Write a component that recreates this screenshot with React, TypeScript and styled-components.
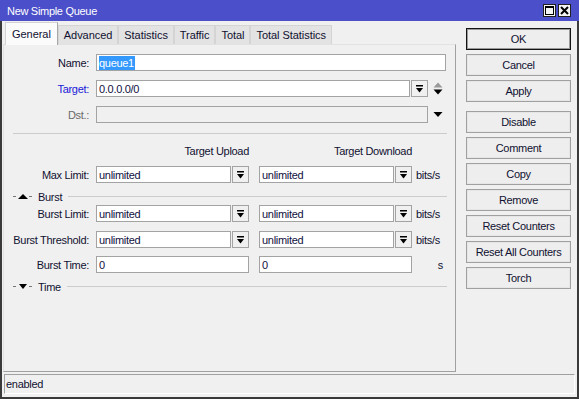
import React from 'react';
import styled, { createGlobalStyle } from 'styled-components';

const GlobalStyle = createGlobalStyle`
  html, body {
    margin: 0;
    padding: 0;
    background: #f0f0f0;
  }
  body {
    font-family: 'Liberation Sans', Arial, sans-serif;
    font-size: 11px;
    letter-spacing: -0.3px;
    color: #101030;
  }
  * {
    box-sizing: border-box;
  }
`;

const Window = styled.div`
  width: 579px;
  height: 399px;
  display: flex;
  flex-direction: column;
  background: #f0f0f0;
`;

const TitleBar = styled.div`
  height: 21px;
  flex: none;
  background: #4b4fc9;
  color: #ffffff;
  display: flex;
  align-items: center;
  padding: 0 8px 0 7px;
  font-size: 11px;
`;

const Title = styled.div`
  flex: 1;
`;

const TitleButtons = styled.div`
  display: flex;
  gap: 2px;
`;

const TitleButton = styled.div`
  width: 13px;
  height: 13px;
  background: #f4f4f4;
  border: 1px solid #202020;
  display: flex;
  align-items: center;
  justify-content: center;
`;

const Body = styled.div`
  flex: 1;
  display: flex;
  flex-direction: column;
  gap: 2px;
  border: 2px solid #3a3a3a;
  border-top: none;
  padding: 1px 2px 3px 1px;
`;

const MainRow = styled.div`
  flex: 1;
  display: flex;
  padding-right: 4px;
`;

const LeftColumn = styled.div`
  width: 453px;
  display: flex;
  flex-direction: column;
`;

const TabStrip = styled.div`
  height: 22px;
  display: flex;
  align-items: flex-end;
  padding-left: 2px;
  position: relative;
  z-index: 1;
`;

const Tab = styled.div<{ $active?: boolean }>`
  height: ${({ $active }) => ($active ? 23 : 19)}px;
  margin-bottom: ${({ $active }) => ($active ? -1 : 0)}px;
  padding: 0 ${({ $active }) => ($active ? 6 : 5)}px;
  display: flex;
  align-items: center;
  background: ${({ $active }) => ($active ? '#fbfbfb' : '#e3e3e3')};
  border: 1px solid #d4d4d4;
  border-right-color: ${({ $active }) => ($active ? '#a8a8a8' : '#d4d4d4')};
  border-bottom: none;
  color: #101030;
  font-size: 11px;
  letter-spacing: -0.05px;
`;

const Panel = styled.div`
  flex: 1;
  border: 1px solid #a0a0a0;
  border-top-color: #e2e2e2;
  border-left-color: #e2e2e2;
  padding: 9px 0 0 0;
  display: flex;
  flex-direction: column;
`;

const Row = styled.div<{ $top?: number }>`
  display: flex;
  align-items: center;
  height: 17px;
  margin-top: ${({ $top }) => $top ?? 0}px;
`;

const Label = styled.div<{ $tone?: 'link' | 'muted' }>`
  width: 86px;
  margin-right: 6px;
  text-align: right;
  padding-right: 1px;
  white-space: nowrap;
  color: ${({ $tone }) =>
    $tone === 'link' ? '#1a1ad8' : $tone === 'muted' ? '#6a6a6a' : '#101030'};
`;

const Field = styled.div<{ $width: number; $disabled?: boolean }>`
  width: ${({ $width }) => $width}px;
  height: 17px;
  border: 1px solid #a3a3a3;
  background: ${({ $disabled }) => ($disabled ? '#f0f0f0' : '#ffffff')};
  padding-left: 2px;
  display: flex;
  align-items: center;
  white-space: nowrap;
  overflow: hidden;
  color: #101040;
`;

const Selected = styled.span`
  background: #3399ff;
  color: #ffffff;
  line-height: 14px;
  padding: 0 1px 0 0;
`;

const DropButton = styled.div`
  width: 17px;
  height: 17px;
  margin-left: 1px;
  border: 1px solid #a3a3a3;
  background: #f0f0f0;
  display: flex;
  align-items: center;
  justify-content: center;
`;

const Pair = styled.div`
  display: flex;
  align-items: center;
`;

const Spacer = styled.div<{ $width: number }>`
  width: ${({ $width }) => $width}px;
  flex: none;
`;

const SideIcon = styled.div`
  width: 10px;
  margin-left: 5px;
  display: flex;
  justify-content: center;
`;

const Unit = styled.div<{ $width: number; $align?: string }>`
  width: ${({ $width }) => $width}px;
  margin-left: 4px;
  text-align: ${({ $align }) => $align ?? 'left'};
  white-space: nowrap;
`;

const Separator = styled.div<{ $top: number }>`
  margin: ${({ $top }) => $top}px 8px 0 9px;
  border-top: 1px solid #cccccc;
`;

const HeaderRow = styled.div`
  display: flex;
  height: 12px;
  margin-top: 11px;
  padding-left: 92px;
  align-items: center;
`;

const ColumnHeader = styled.div`
  width: 153px;
  text-align: right;
  white-space: nowrap;
`;

const Section = styled.div<{ $top: number }>`
  display: flex;
  align-items: center;
  height: 13px;
  margin: ${({ $top }) => $top}px 8px 0 9px;
  gap: 5px;
`;

const SectionTitle = styled.div`
  white-space: nowrap;
`;

const SectionLine = styled.div`
  flex: 1;
  border-top: 1px solid #cccccc;
  margin-left: 1px;
`;

const ButtonColumn = styled.div`
  width: 105px;
  margin: 6px 0 0 10px;
  display: flex;
  flex-direction: column;
`;

const ActionButton = styled.div<{ $primary?: boolean; $gap?: number }>`
  height: 22px;
  margin-top: ${({ $gap }) => $gap ?? 4}px;
  border: 1px solid ${({ $primary }) => ($primary ? '#141414' : '#a0a0a0')};
  box-shadow: inset 0 0 0 1px ${({ $primary }) => ($primary ? '#9a9a9a' : '#e6e6e6')};
  background: #eeeeee;
  display: flex;
  align-items: center;
  justify-content: center;
  color: #101030;
  font-size: 11px;
  white-space: nowrap;
`;

const StatusBar = styled.div`
  height: 20px;
  margin-left: 1px;
  border: 1px solid #ffffff;
  border-top-color: #a0a0a0;
  border-left-color: #a0a0a0;
  display: flex;
  align-items: center;
  padding-left: 1px;
  color: #101030;
`;

const DropIcon = () => (
  <svg width="7" height="8" viewBox="0 0 7 8">
    <rect x="0" y="0" width="7" height="1.5" fill="#000" />
    <polygon points="0,3 7,3 3.5,7.5" fill="#000" />
  </svg>
);

const UpDownIcon = () => (
  <svg width="10" height="13" viewBox="0 0 10 13">
    <polygon points="0.5,5.5 9.5,5.5 5,0.5" fill="#9a9a9a" />
    <polygon points="0.5,7.5 9.5,7.5 5,12.5" fill="#000" />
  </svg>
);

const DownIcon = () => (
  <svg width="10" height="5" viewBox="0 0 10 5">
    <polygon points="0.5,0 9.5,0 5,5" fill="#000" />
  </svg>
);

const SectionToggle = ({ open }: { open: boolean }) => (
  <svg width="20" height="7" viewBox="0 0 20 7">
    <rect x="0" y="3" width="3" height="1" fill="#777" />
    {open ? (
      <polygon points="5,6 15,6 10,1" fill="#000" />
    ) : (
      <polygon points="6,1 14,1 10,6" fill="#000" />
    )}
    <rect x="16" y="3" width="3" height="1" fill="#777" />
  </svg>
);

const LimitRow = ({ label, top }: { label: string; top: number }) => (
  <Row $top={top}>
    <Label>{label}</Label>
    <Pair>
      <Field $width={135}>unlimited</Field>
      <DropButton>
        <DropIcon />
      </DropButton>
    </Pair>
    <Spacer $width={10} />
    <Pair>
      <Field $width={135}>unlimited</Field>
      <DropButton>
        <DropIcon />
      </DropButton>
    </Pair>
    <Unit $width={30}>bits/s</Unit>
  </Row>
);

const tabs = ['General', 'Advanced', 'Statistics', 'Traffic', 'Total', 'Total Statistics'];

const actions = [
  { title: 'OK', primary: true, gap: 0 },
  { title: 'Cancel' },
  { title: 'Apply' },
  { title: 'Disable', gap: 9 },
  { title: 'Comment' },
  { title: 'Copy' },
  { title: 'Remove' },
  { title: 'Reset Counters' },
  { title: 'Reset All Counters' },
  { title: 'Torch' },
];

export default function App() {
  return (
    <>
      <GlobalStyle />
      <Window>
        <TitleBar>
          <Title>New Simple Queue</Title>
          <TitleButtons>
            <TitleButton>
              <svg width="9" height="9" viewBox="0 0 9 9">
                <rect x="0.5" y="0.5" width="8" height="8" fill="none" stroke="#000" />
                <rect x="0.5" y="0.5" width="8" height="1.5" fill="#000" />
              </svg>
            </TitleButton>
            <TitleButton>
              <svg width="9" height="9" viewBox="0 0 9 9">
                <path d="M1 1 L8 8 M8 1 L1 8" stroke="#000" strokeWidth="2" />
              </svg>
            </TitleButton>
          </TitleButtons>
        </TitleBar>
        <Body>
          <MainRow>
            <LeftColumn>
              <TabStrip>
                {tabs.map((t, i) => (
                  <Tab key={t} $active={i === 0}>
                    {t}
                  </Tab>
                ))}
              </TabStrip>
              <Panel>
                <Row>
                  <Label>Name:</Label>
                  <Field $width={350}>
                    <Selected>queue1</Selected>
                  </Field>
                </Row>
                <Row $top={9}>
                  <Label $tone="link">Target:</Label>
                  <Field $width={314}>0.0.0.0/0</Field>
                  <DropButton>
                    <DropIcon />
                  </DropButton>
                  <SideIcon>
                    <UpDownIcon />
                  </SideIcon>
                </Row>
                <Row $top={9}>
                  <Label $tone="muted">Dst.:</Label>
                  <Field $width={332} $disabled />
                  <SideIcon>
                    <DownIcon />
                  </SideIcon>
                </Row>
                <Separator $top={10} />
                <HeaderRow>
                  <ColumnHeader>Target Upload</ColumnHeader>
                  <Spacer $width={10} />
                  <ColumnHeader>Target Download</ColumnHeader>
                </HeaderRow>
                <LimitRow label="Max Limit:" top={9} />
                <Section $top={7}>
                  <SectionToggle open />
                  <SectionTitle>Burst</SectionTitle>
                  <SectionLine />
                </Section>
                <LimitRow label="Burst Limit:" top={2} />
                <LimitRow label="Burst Threshold:" top={9} />
                <Row $top={8}>
                  <Label>Burst Time:</Label>
                  <Field $width={153}>0</Field>
                  <Spacer $width={10} />
                  <Field $width={153}>0</Field>
                  <Unit $width={27} $align="right">
                    s
                  </Unit>
                </Row>
                <Section $top={7}>
                  <SectionToggle open={false} />
                  <SectionTitle>Time</SectionTitle>
                  <SectionLine />
                </Section>
              </Panel>
            </LeftColumn>
            <ButtonColumn>
              {actions.map((a) => (
                <ActionButton key={a.title} $primary={a.primary} $gap={a.gap}>
                  {a.title}
                </ActionButton>
              ))}
            </ButtonColumn>
          </MainRow>
          <StatusBar>enabled</StatusBar>
        </Body>
      </Window>
    </>
  );
}
